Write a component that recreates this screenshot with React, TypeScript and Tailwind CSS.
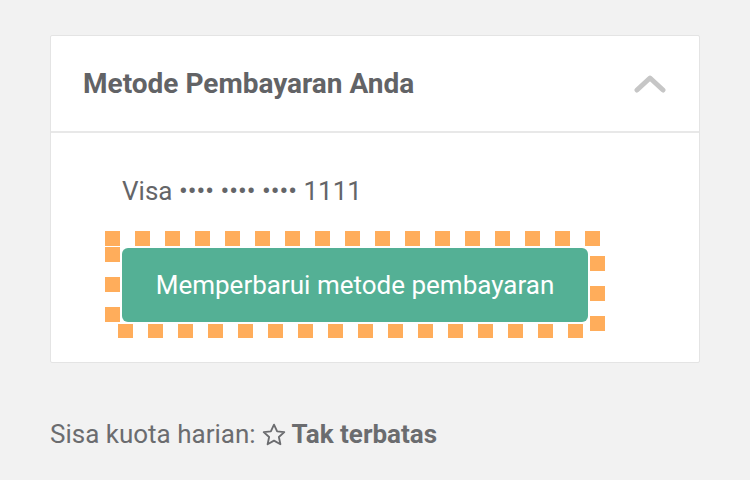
import React from "react";

const topDots = Array.from({ length: 17 }, (_, i) => i * 30);
const bottomDots = Array.from({ length: 16 }, (_, i) => 13 + i * 30);

const FocusRing: React.FC = () => (
  <svg
    className="absolute left-[-17px] top-[-17px] pointer-events-none"
    width="500"
    height="107"
    viewBox="0 0 500 107"
  >
    <g fill="#ffad5b">
      {topDots.map((x) => (
        <rect key={"t" + x} x={x} y={0} width={15} height={15} />
      ))}
      {bottomDots.map((x) => (
        <rect key={"b" + x} x={x} y={93} width={15} height={14} />
      ))}
      {[16, 46, 76].map((y) => (
        <rect key={"l" + y} x={0} y={y} width={15} height={15} />
      ))}
      {[25, 55, 85].map((y) => (
        <rect key={"r" + y} x={485} y={y} width={15} height={15} />
      ))}
    </g>
  </svg>
);

export default function App() {
  return (
    <div
      className="w-[750px] h-[480px] bg-[#f2f2f2] pt-[35px] px-[50px]"
      style={{ fontFamily: "Roboto, 'Liberation Sans', sans-serif" }}
    >
      {/* Payment card */}
      <div className="w-[650px] bg-white border border-[#e4e4e4] rounded-[2px]">
        <div className="h-[97px] px-[32px] flex items-center justify-between border-b-2 border-[#e8e8e8]">
          <h2 className="text-[28px] font-bold text-[#626366]">
            Metode Pembayaran Anda
          </h2>
          <svg width="32" height="20" viewBox="0 0 32 20" className="mr-[1px]">
            <path
              d="M3 16 L16 4 L29 16"
              fill="none"
              stroke="#c6c6c6"
              strokeWidth="5"
              strokeLinecap="round"
              strokeLinejoin="round"
            />
          </svg>
        </div>

        <div className="pl-[71px] pt-[44px] pb-[40px]">
          <p className="text-[26px] leading-[28px] text-[#646568]">
            Visa •••• •••• •••• 1111
          </p>
          <div className="relative w-[466px] mt-[43px]">
            <button className="w-[466px] h-[74px] bg-[#54b095] text-white text-[26px] rounded-[6px]">
              Memperbarui metode pembayaran
            </button>
            <FocusRing />
          </div>
        </div>
      </div>

      {/* Quota */}
      <div className="mt-[52px] flex items-center text-[26px] text-[#6b6c6f]">
        <span>Sisa kuota harian:</span>
        <svg
          width="26"
          height="26"
          viewBox="0 0 24 24"
          className="mx-[5px]"
          fill="none"
          stroke="#6b6c6f"
          strokeWidth="1.7"
          strokeLinejoin="round"
        >
          <path d="M12 2.5l2.9 6.2 6.6.7-5 4.5 1.4 6.6L12 17.2l-5.9 3.3 1.4-6.6-5-4.5 6.6-.7z" />
        </svg>
        <span className="font-bold">Tak terbatas</span>
      </div>
    </div>
  );
}
